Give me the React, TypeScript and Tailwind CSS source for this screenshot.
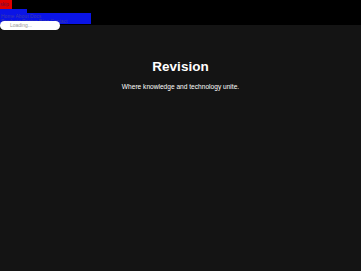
import React from 'react';

const App = () => {
  return (
    <div className="min-h-[271px] w-full bg-[#141414] font-['Liberation_Sans',Arial,sans-serif]">
      <div className="relative h-[25px] bg-black">
        <div className="absolute left-0 top-0 flex h-[9px] w-[12px] items-center overflow-hidden bg-[#e00000] text-[5px] leading-none text-[#6a1040]">
          skip
        </div>
        <div className="absolute left-0 top-[9px] flex flex-col">
          <div className="h-[4px] w-[27px] bg-[#0a14e6]" />
          <div className="flex h-[11px] w-[91px] flex-col justify-center overflow-hidden whitespace-nowrap bg-[#0a14e6] px-[1px] text-[5px] leading-[5px] text-[#3a3ab0]">
            <span>Home About Docs</span>
            <span>Products Pricing Blog Contact</span>
          </div>
        </div>
        <div className="absolute left-0 top-[21px] flex h-[9px] w-[60px] items-center rounded-[4.5px] bg-white pl-[10px] text-[5px] leading-none text-[#9a9a9a]">
          Loading...
        </div>
      </div>
      <div className="flex flex-col items-center pt-[33px]">
        <h1 className="text-[13.5px] font-bold leading-[17px] text-white">Revision</h1>
        <p className="mt-[8px] text-[6.6px] leading-[8px] text-white">
          Where knowledge and technology unite.
        </p>
      </div>
    </div>
  );
};

export default App;
